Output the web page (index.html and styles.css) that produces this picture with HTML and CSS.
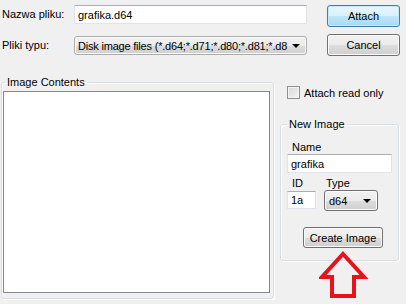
FILE: index.html
```html
<!DOCTYPE html>
<html>
<head>
    <title>Attach Disk Image</title>
    <link rel="stylesheet" href="styles.css">
</head>
<body>

<div class="dialog">

    <!-- FILE NAME / TYPE -->
    <div class="row first">
        <label class="caption">Nazwa pliku:</label>
        <input class="edit wide" value="grafika.d64">
        <button class="btn default">Attach</button>
    </div>

    <div class="row second">
        <label class="caption">Pliki typu:</label>
        <div class="combo wide">
            <span class="combo-text filter">Disk image files (*.d64;*.d71;*.d80;*.d81;*.d8</span>
            <span class="arrow"></span>
        </div>
        <button class="btn">Cancel</button>
    </div>

    <!-- MAIN AREA -->
    <div class="main">
        <fieldset class="group contents">
            <legend>Image Contents</legend>
            <div class="listbox"></div>
        </fieldset>

        <div class="side">
            <label class="check-row">
                <span class="checkbox"></span>
                <span>Attach read only</span>
            </label>

            <fieldset class="group new-image">
                <legend>New Image</legend>
                <div class="field-label">Name</div>
                <input class="edit name" value="grafika">

                <div class="id-type">
                    <div class="col-id">
                        <div class="field-label">ID</div>
                        <input class="edit id" value="1a">
                    </div>
                    <div class="col-type">
                        <div class="field-label">Type</div>
                        <div class="combo type">
                            <span class="combo-text">d64</span>
                            <span class="arrow"></span>
                        </div>
                    </div>
                </div>

                <button class="btn create">Create Image</button>
            </fieldset>
        </div>
    </div>

    <!-- annotation arrow -->
    <svg class="hint-arrow" width="50" height="50" viewBox="0 0 50 50">
        <polygon points="24,3 45,26 35,26 35,45 13,45 13,26 3,26"
                 fill="none" stroke="#e8121c" stroke-width="4" stroke-linejoin="miter"/>
    </svg>

</div>

</body>
</html>
```

FILE: styles.css
```css
body {
    margin: 0;
    background: #f0f0f0;
    font-family: "Liberation Sans", Arial, sans-serif;
    font-size: 11px;
    color: #000;
    width: 406px;
    height: 304px;
    overflow: hidden;
}

.dialog {
    position: relative;
    height: 304px;
    padding: 0 6px 0 2px;
    box-sizing: border-box;
}

.row {
    display: flex;
    align-items: flex-start;
}

.row.first {
    padding-top: 5px;
}

.row.second {
    margin-top: 7px;
}

.caption {
    width: 72px;
    line-height: 19px;
}

.row.second .caption {
    margin-top: 2px;
}

.edit {
    box-sizing: border-box;
    height: 19px;
    margin: 0;
    padding: 0 3px;
    border: 1px solid #e2e3ea;
    border-top-color: #abadb3;
    background: #fff;
    font-family: inherit;
    font-size: 11px;
    color: #000;
    outline: none;
}

.wide {
    width: 233px;
}

.btn {
    box-sizing: border-box;
    width: 73px;
    height: 22px;
    margin: 0 0 0 20px;
    padding: 0;
    border: 1px solid #707070;
    border-radius: 3px;
    background: linear-gradient(#f2f2f2 0%, #ebebeb 50%, #dddddd 51%, #cfcfcf 100%);
    box-shadow: inset 0 0 0 1px #fcfcfc;
    font-family: inherit;
    font-size: 11px;
    color: #000;
}

.btn.default {
    border-color: #3c7fb1;
    background: linear-gradient(#eaf6fd 0%, #d9f0fc 50%, #bee6fd 51%, #a7d9f5 100%);
    box-shadow: inset 0 0 0 1px #c6e7fa;
}

.combo {
    box-sizing: border-box;
    display: flex;
    align-items: center;
    height: 19px;
    border: 1px solid #acacac;
    border-radius: 3px;
    background: linear-gradient(#f2f2f2 0%, #ebebeb 50%, #dddddd 51%, #cfcfcf 100%);
    box-shadow: inset 0 0 0 1px #fcfcfc;
}

.row.second .combo {
    margin-top: 2px;
}

.combo-text {
    flex: 1;
    min-width: 0;
    padding-left: 3px;
    white-space: nowrap;
    overflow: hidden;
}

.combo-text.filter {
    letter-spacing: -0.2px;
}

.arrow {
    flex: none;
    width: 0;
    height: 0;
    margin: 0 6px 0 4px;
    border-left: 4px solid transparent;
    border-right: 4px solid transparent;
    border-top: 4px solid #000;
}

.main {
    display: flex;
    margin-top: 19px;
    padding-left: 0;
}

.group {
    box-sizing: border-box;
    margin: 0;
    border: 1px solid #d5dfe5;
    border-radius: 3px;
    box-shadow: inset 1px 1px 0 #fff, 1px 1px 0 #fff;
}

.group legend {
    padding: 0 2px;
    line-height: 14px;
}

.contents {
    width: 273px;
    height: 224px;
    margin-left: -1px;
    padding: 0 3px 5px 0;
}

.contents legend {
    margin-left: 3px;
}

.listbox {
    box-sizing: border-box;
    height: 202px;
    margin-top: 2px;
    margin-left: 1px;
    border: 1px solid #828790;
    background: #fff;
}

.side {
    width: 119px;
    margin-left: 6px;
}

.check-row {
    display: flex;
    align-items: center;
    margin-top: 11px;
    margin-left: 7px;
    height: 13px;
}

.checkbox {
    box-sizing: border-box;
    width: 13px;
    height: 13px;
    margin-right: 4px;
    border: 1px solid #8f8f8f;
    background: linear-gradient(135deg, #d6d6d6, #f4f4f4);
    box-shadow: inset 0 0 0 1px #f4f4f4;
}

.new-image {
    height: 144px;
    margin-top: 18px;
    padding: 0 6px;
}

.new-image legend {
    margin-left: 0;
}

.field-label {
    line-height: 14px;
    padding-left: 5px;
}

.new-image > .field-label {
    margin-top: 9px;
}

.edit.name {
    width: 105px;
}

.id-type {
    display: flex;
    margin-top: 3px;
}

.col-id {
    width: 29px;
}

.edit.id {
    width: 29px;
    height: 18px;
    margin-top: 1px;
}

.col-type {
    margin-left: 8px;
}

.col-type .field-label {
    padding-left: 2px;
}

.combo.type {
    width: 54px;
    height: 21px;
    border-color: #707070;
}

.combo.type .combo-text {
    padding-left: 4px;
}

.btn.create {
    width: 80px;
    height: 21px;
    margin: 16px 0 0 16px;
}

/* red annotation arrow over the group box */
.hint-arrow {
    position: absolute;
    left: 319px;
    top: 251px;
}
```
